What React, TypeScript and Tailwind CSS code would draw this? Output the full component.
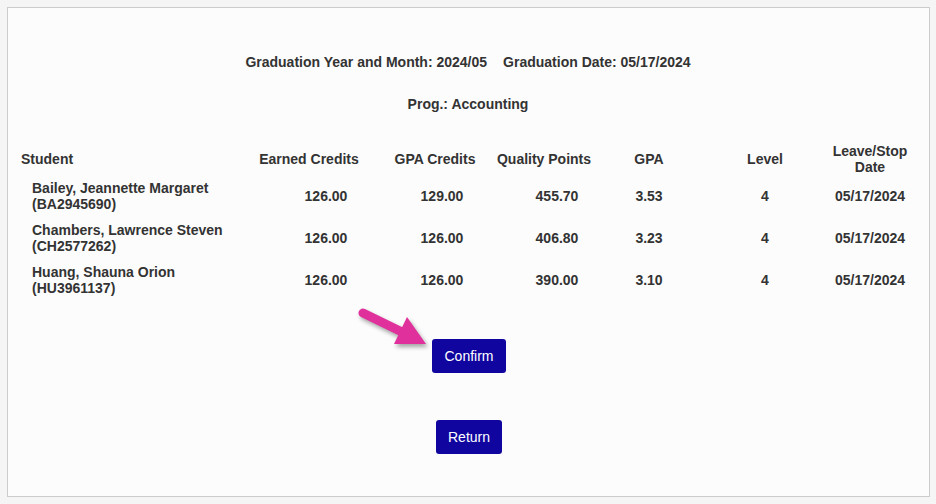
import React from 'react';

type Row = {
    name: string;
    id: string;
    earned: string;
    gpaCredits: string;
    quality: string;
    gpa: string;
    level: string;
    leaveDate: string;
};

const rows: Row[] = [
    { name: 'Bailey, Jeannette Margaret', id: 'BA2945690', earned: '126.00', gpaCredits: '129.00', quality: '455.70', gpa: '3.53', level: '4', leaveDate: '05/17/2024' },
    { name: 'Chambers, Lawrence Steven', id: 'CH2577262', earned: '126.00', gpaCredits: '126.00', quality: '406.80', gpa: '3.23', level: '4', leaveDate: '05/17/2024' },
    { name: 'Huang, Shauna Orion', id: 'HU3961137', earned: '126.00', gpaCredits: '126.00', quality: '390.00', gpa: '3.10', level: '4', leaveDate: '05/17/2024' },
];

const gridCols = 'grid grid-cols-[219px_138px_114px_104px_106px_126px_84px]';

function PointerArrow() {
    return (
        <svg
            className="absolute left-[347px] top-[297px] drop-shadow-[2px_3px_2px_rgba(0,0,0,0.35)]"
            width="84"
            height="54"
            viewBox="0 0 84 54"
        >
            {/* shaft */}
            <line x1="8" y1="8" x2="47" y2="27" stroke="#e0309b" strokeWidth="9" strokeLinecap="round" />
            {/* head */}
            <polygon points="39,39 52,12 71,39" fill="#e0309b" />
        </svg>
    );
}

export default function App() {
    return (
        <div className="min-h-[504px] bg-[#f5f5f5] pt-[7px] pl-[7px] pr-[6px] pb-[7px] font-['Liberation_Sans',Arial,sans-serif] text-[14px] leading-[16px] text-[#333333]">
            <div className="relative h-[490px] border border-[#cccccc] bg-[#fcfcfc] pt-[46px] pl-[13px] pr-[16px]">
                {/* Heading */}
                <div className="flex justify-center gap-4 pl-[2px] font-bold">
                    <span>Graduation Year and Month: 2024/05</span>
                    <span>Graduation Date: 05/17/2024</span>
                </div>
                <div className="mt-[26px] pl-[2px] text-center font-bold">Prog.: Accounting</div>

                {/* Table */}
                <div className="mt-[31px] font-bold">
                    <div className={`${gridCols} items-center`}>
                        <div>Student</div>
                        <div className="text-center">Earned Credits</div>
                        <div className="text-center">GPA Credits</div>
                        <div className="text-center">Quality Points</div>
                        <div className="text-center">GPA</div>
                        <div className="text-center">Level</div>
                        <div className="text-center">Leave/Stop Date</div>
                    </div>
                    {rows.map((r, i) => (
                        <div key={i} className={`${gridCols} items-center mt-[5px] pb-[5px]`}>
                            <div className="pl-[11px]">
                                <div>{r.name}</div>
                                <div>({r.id})</div>
                            </div>
                            <div className="text-center pl-[34px]">{r.earned}</div>
                            <div className="text-center pl-[14px]">{r.gpaCredits}</div>
                            <div className="text-center pl-[26px]">{r.quality}</div>
                            <div className="text-center">{r.gpa}</div>
                            <div className="text-center">{r.level}</div>
                            <div className="text-center">{r.leaveDate}</div>
                        </div>
                    ))}
                </div>

                {/* Actions */}
                <div className="mt-[38px] flex flex-col items-center gap-[47px] pl-[4px]">
                    <button className="h-[34px] rounded-[3px] bg-[#10069f] px-3 font-normal leading-[16px] text-white">
                        Confirm
                    </button>
                    <button className="h-[34px] rounded-[3px] bg-[#10069f] px-3 font-normal leading-[16px] text-white">
                        Return
                    </button>
                </div>

                <PointerArrow />
            </div>
        </div>
    );
}
